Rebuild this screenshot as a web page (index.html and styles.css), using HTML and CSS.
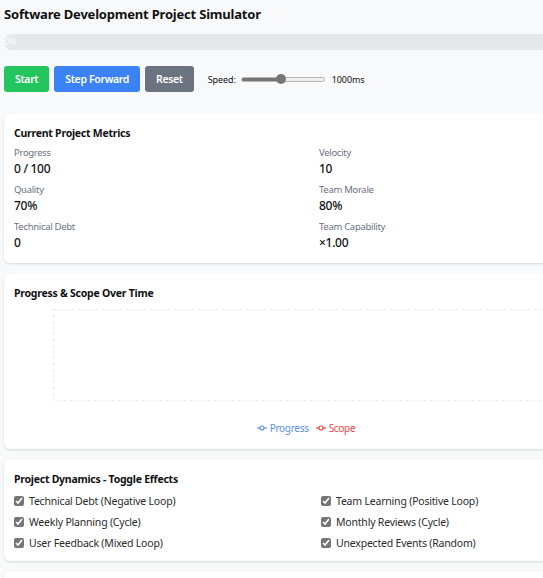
FILE: index.html
```html
<!DOCTYPE html>
<html lang="en">
<head>
<meta charset="utf-8">
<title>Software Development Project Simulator</title>
<link rel="stylesheet" href="styles.css">
</head>
<body>
<div class="app">
  <h1 class="page-title">Software Development Project Simulator</h1>

  <div class="progress-track">
    <div class="progress-fill" style="width: 0%"><span>0%</span></div>
  </div>

  <div class="controls">
    <button class="btn btn-start">Start</button>
    <button class="btn btn-step">Step Forward</button>
    <button class="btn btn-reset">Reset</button>
    <label class="speed">
      <span>Speed:</span>
      <input class="speed-range" type="range" min="100" max="2000" step="100" value="1000" style="--fill: 44%">
      <span class="speed-value">1000ms</span>
    </label>
  </div>

  <section class="card card-metrics">
    <h2 class="card-title">Current Project Metrics</h2>
    <div class="metrics">
      <div class="metric"><div class="metric-label">Progress</div><div class="metric-value">0 / 100</div></div>
      <div class="metric"><div class="metric-label">Velocity</div><div class="metric-value">10</div></div>
      <div class="metric"><div class="metric-label">Quality</div><div class="metric-value">70%</div></div>
      <div class="metric"><div class="metric-label">Team Morale</div><div class="metric-value">80%</div></div>
      <div class="metric"><div class="metric-label">Technical Debt</div><div class="metric-value">0</div></div>
      <div class="metric"><div class="metric-label">Team Capability</div><div class="metric-value">×1.00</div></div>
    </div>
  </section>

  <section class="card card-chart">
    <h2 class="card-title">Progress &amp; Scope Over Time</h2>
    <div class="plot">
      <svg class="plot-grid" width="560" height="92" viewBox="0 0 560 92">
        <rect x="0.5" y="0.5" width="600" height="91" fill="none" stroke="#ebebeb" stroke-dasharray="3 3"/>
      </svg>
    </div>
    <div class="legend">
      <span class="legend-item legend-progress">
        <svg width="10" height="8" viewBox="0 0 10 8"><line x1="0" y1="4" x2="10" y2="4" stroke="currentColor" stroke-width="1.2"/><circle cx="5" cy="4" r="2" fill="#fff" stroke="currentColor" stroke-width="1.1"/></svg>
        Progress
      </span>
      <span class="legend-item legend-scope">
        <svg width="10" height="8" viewBox="0 0 10 8"><line x1="0" y1="4" x2="10" y2="4" stroke="currentColor" stroke-width="1.2"/><circle cx="5" cy="4" r="2" fill="#fff" stroke="currentColor" stroke-width="1.1"/></svg>
        Scope
      </span>
    </div>
  </section>

  <section class="card card-toggles">
    <h2 class="card-title">Project Dynamics - Toggle Effects</h2>
    <div class="toggles">
      <label class="toggle"><input type="checkbox" checked>Technical Debt (Negative Loop)</label>
      <label class="toggle"><input type="checkbox" checked>Team Learning (Positive Loop)</label>
      <label class="toggle"><input type="checkbox" checked>Weekly Planning (Cycle)</label>
      <label class="toggle"><input type="checkbox" checked>Monthly Reviews (Cycle)</label>
      <label class="toggle"><input type="checkbox" checked>User Feedback (Mixed Loop)</label>
      <label class="toggle"><input type="checkbox" checked>Unexpected Events (Random)</label>
    </div>
  </section>

  <section class="card card-empty"></section>
</div>
</body>
</html>
```

FILE: styles.css
```css
html {
  overflow: hidden;
}

body {
  margin: 0;
  background: #f8f9fb;
  font-family: "Noto Sans", "Open Sans", sans-serif;
  color: #111;
}

.app {
  width: 614px;
  padding: 4px;
}

.page-title {
  margin: 0;
  font-size: 13px;
  line-height: 20px;
  font-weight: 700;
  letter-spacing: -0.2px;
}

.progress-track {
  margin-top: 10px;
  height: 16px;
  border-radius: 8px;
  background: #e5e7eb;
  overflow: hidden;
}

.progress-fill {
  height: 100%;
  background: #3b82f6;
  color: #fff;
  font-size: 9px;
  line-height: 16px;
  white-space: nowrap;
}

.controls {
  display: flex;
  align-items: center;
  gap: 5px;
  margin-top: 16px;
}

.btn {
  height: 26px;
  padding: 0 11px;
  border: 0;
  border-radius: 3px;
  color: #fff;
  font-family: inherit;
  font-size: 10.5px;
  font-weight: 600;
  letter-spacing: -0.35px;
}

.btn-start { background: #22c55e; }
.btn-step { background: #3b82f6; }
.btn-reset { background: #6b7280; }

.speed {
  display: flex;
  align-items: center;
  gap: 5px;
  margin-left: 9px;
  font-size: 9px;
  letter-spacing: -0.1px;
}

.speed-value {
  margin-left: 2px;
}

.speed-range {
  -webkit-appearance: none;
  appearance: none;
  width: 84px;
  height: 10px;
  margin: 0;
  background: transparent;
}

.speed-range::-webkit-slider-runnable-track {
  height: 5px;
  border-radius: 3px;
  border: 1px solid #b4b4b4;
  background: linear-gradient(to right, #757575 var(--fill), #efefef var(--fill));
}

.speed-range::-webkit-slider-thumb {
  -webkit-appearance: none;
  appearance: none;
  width: 10px;
  height: 10px;
  margin-top: -3.5px;
  border-radius: 50%;
  background: #757575;
}

.card {
  margin-top: 11px;
  padding: 11px 10px 11px;
  background: #fff;
  border-radius: 6px;
  box-shadow: 0 1px 2px rgba(0, 0, 0, 0.08), 0 1px 3px rgba(0, 0, 0, 0.06);
}

.controls + .card {
  margin-top: 22px;
}

.card-title {
  margin: 0;
  font-size: 10.5px;
  line-height: 16px;
  font-weight: 700;
  letter-spacing: -0.25px;
}

.metrics {
  display: grid;
  grid-template-columns: 1fr 1fr;
  column-gap: 16px;
  row-gap: 5px;
  margin-top: 5px;
}

.metric-label {
  font-size: 9.5px;
  line-height: 14px;
  color: #6b7280;
  letter-spacing: -0.3px;
}

.metric-value {
  font-size: 12px;
  line-height: 18px;
  font-weight: 500;
  letter-spacing: -0.3px;
}

.card-chart {
  padding-bottom: 13px;
}

.plot {
  margin-top: 8px;
  margin-left: 39px;
  height: 92px;
}

.plot-grid {
  display: block;
  overflow: visible;
}

.legend {
  display: flex;
  justify-content: center;
  gap: 7px;
  margin-top: 19px;
  padding-right: 10px;
  font-size: 10px;
  line-height: 16px;
  letter-spacing: -0.3px;
}

.legend-item {
  display: inline-flex;
  align-items: center;
  gap: 3px;
}

.legend-progress { color: #5b8ff0; }
.legend-scope { color: #ef4444; }

.card-toggles {
  padding-bottom: 8px;
}

.toggles {
  display: grid;
  grid-template-columns: 1fr 1fr;
  column-gap: 20px;
  margin-top: 3px;
}

.toggle {
  display: flex;
  align-items: center;
  gap: 5px;
  height: 21px;
  font-size: 10.5px;
  letter-spacing: -0.2px;
  color: #2b2b2b;
}

.toggle input {
  width: 10px;
  height: 10px;
  margin: 0;
  accent-color: #757575;
}

.card-empty {
  height: 60px;
}
```
